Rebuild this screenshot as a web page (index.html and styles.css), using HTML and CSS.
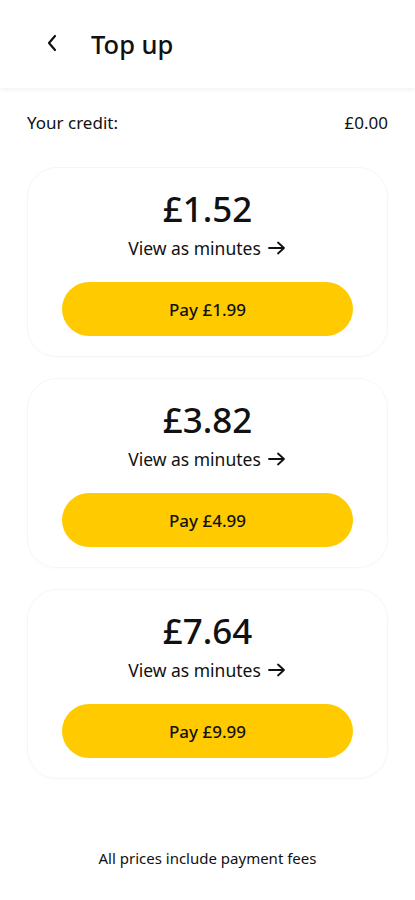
FILE: index.html
```html
<!DOCTYPE html>
<html lang="en">
<head>
  <meta charset="UTF-8">
  <meta name="viewport" content="width=device-width, initial-scale=1.0">
  <title>Top up</title>
  <link rel="stylesheet" href="styles.css">
</head>
<body>
  <header class="topbar">
    <button class="back" type="button" aria-label="Back">
      <svg width="12" height="18" viewBox="0 0 12 18"><path d="M9 2 L3 9 L9 16" fill="none" stroke="#111" stroke-width="2.2" stroke-linecap="round" stroke-linejoin="round"/></svg>
    </button>
    <h1>Top up</h1>
  </header>

  <main class="content">
    <div class="credit">
      <span>Your credit:</span>
      <span>£0.00</span>
    </div>

    <div class="card">
      <div class="amount">£1.52</div>
      <a class="minutes" href="#">View as minutes
        <svg width="20" height="14" viewBox="0 0 20 14"><path d="M2 7 H17 M11 1.5 L17 7 L11 12.5" fill="none" stroke="#111" stroke-width="1.8" stroke-linecap="round" stroke-linejoin="round"/></svg>
      </a>
      <button class="pay" type="button">Pay £1.99</button>
    </div>

    <div class="card">
      <div class="amount">£3.82</div>
      <a class="minutes" href="#">View as minutes
        <svg width="20" height="14" viewBox="0 0 20 14"><path d="M2 7 H17 M11 1.5 L17 7 L11 12.5" fill="none" stroke="#111" stroke-width="1.8" stroke-linecap="round" stroke-linejoin="round"/></svg>
      </a>
      <button class="pay" type="button">Pay £4.99</button>
    </div>

    <div class="card">
      <div class="amount">£7.64</div>
      <a class="minutes" href="#">View as minutes
        <svg width="20" height="14" viewBox="0 0 20 14"><path d="M2 7 H17 M11 1.5 L17 7 L11 12.5" fill="none" stroke="#111" stroke-width="1.8" stroke-linecap="round" stroke-linejoin="round"/></svg>
      </a>
      <button class="pay" type="button">Pay £9.99</button>
    </div>

    <p class="note">All prices include payment fees</p>
  </main>
</body>
</html>
```

FILE: styles.css
```css
body {
  margin: 0;
  font-family: 'Noto Sans', 'Open Sans', sans-serif;
  background-color: #fff;
  color: #111;
}

.topbar {
  height: 88px;
  display: flex;
  align-items: center;
  padding: 0 0 0 42px;
  box-sizing: border-box;
  box-shadow: 0 2px 4px rgba(0, 0, 0, 0.05);
}

.back {
  background: none;
  border: none;
  padding: 0;
  width: 20px;
  height: 24px;
  display: flex;
  align-items: center;
  justify-content: center;
  margin-right: 29px;
  margin-top: -2px;
}

.topbar h1 {
  margin: 0;
  font-size: 25.5px;
  font-weight: 500;
  line-height: 30px;
}

.content {
  padding: 0 27px;
}

.credit {
  display: flex;
  justify-content: space-between;
  font-size: 17px;
  line-height: 20px;
  margin-top: 25px;
  margin-bottom: 34px;
}

.card {
  border: 1px solid #f6f6f6;
  border-radius: 30px;
  box-shadow: 0 1px 3px rgba(0, 0, 0, 0.02);
  padding: 21px 34px 20px;
  display: flex;
  flex-direction: column;
  align-items: center;
  margin-bottom: 21px;
}

.amount {
  font-size: 35px;
  font-weight: 500;
  line-height: 40px;
}

.minutes {
  display: flex;
  align-items: center;
  gap: 6px;
  margin-top: 7px;
  font-size: 17.5px;
  line-height: 24px;
  color: #111;
  text-decoration: none;
}

.pay {
  margin-top: 22px;
  width: 100%;
  height: 54px;
  border: none;
  border-radius: 27px;
  background-color: #ffca00;
  font-family: inherit;
  font-size: 17px;
  font-weight: 500;
  color: #111;
}

.note {
  margin: 69px 0 0;
  text-align: center;
  font-size: 15px;
  line-height: 20px;
}
```
